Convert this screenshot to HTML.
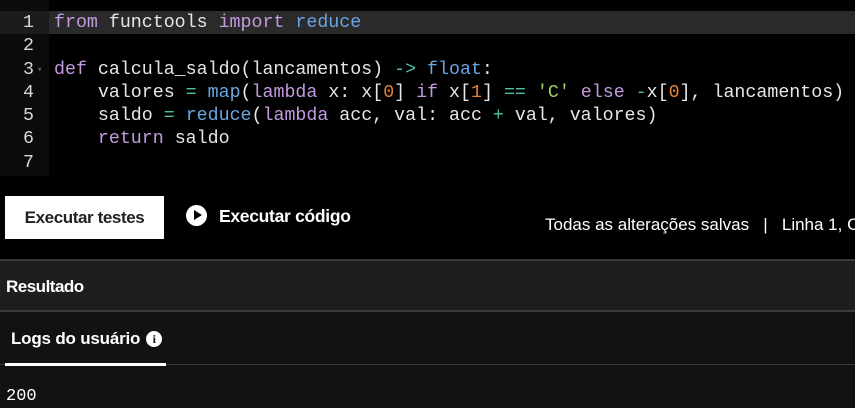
<!DOCTYPE html>
<html><head><style>
body{margin:0;width:855px;height:408px;background:#000;overflow:hidden;font-family:"Liberation Sans",sans-serif;position:relative}
.ed{position:absolute;left:0;top:0;width:855px;height:176px;background:#000}
.gut{position:absolute;left:0;top:0;width:49px;height:176px;background:#0b0b0b}
.hl{position:absolute;left:49px;top:11px;width:806px;height:23px;background:#2a2a2a}
.hlg{position:absolute;left:0;top:11px;width:49px;height:23px;background:#1c1c1c}
.code{position:absolute;left:0;top:12px;width:855px;font-family:"Liberation Mono",monospace;font-size:18.3px;line-height:23.3px;color:#e6e6e6;overflow:hidden}
.l{position:relative;height:23.3px;white-space:pre}
.ln{position:absolute;left:0;width:34px;text-align:right;color:#d8d8d8}
.ar{position:absolute;left:37px;top:0;color:#666;font-size:9px}
.t{position:absolute;left:54px}
.k{color:#c39ae0}.f{color:#6aa6e4}.o{color:#4fc0a8}.n{color:#e8822e}.s{color:#9ccf6a}
.btn{position:absolute;left:5px;top:196px;width:159px;height:43px;background:#fff;color:#222;font-weight:bold;font-size:17px;line-height:43px;text-align:center;letter-spacing:-0.4px}
.run{position:absolute;left:186px;top:205px;color:#fff;font-weight:bold;font-size:17.5px;line-height:22px;letter-spacing:-0.3px}
.ic{display:inline-block;width:21px;height:21px;border-radius:50%;background:#fff;vertical-align:middle;position:relative;margin-right:12px;top:-2px}
.ic:after{content:"";position:absolute;left:8px;top:5px;border-left:8px solid #000;border-top:5.5px solid transparent;border-bottom:5.5px solid transparent}
.stw{position:absolute;left:545px;top:212px;width:310px;height:26px;overflow:hidden}
.st{position:absolute;left:0;top:3px;color:#fff;font-size:17px;white-space:nowrap}
.res{position:absolute;left:0;top:259px;width:855px;height:51px;background:#1d1e20;border-top:2px solid #3a3a3a;box-sizing:border-box}
.res span{position:absolute;left:6px;top:16px;color:#fff;font-weight:bold;font-size:17px;letter-spacing:-0.5px}
.logs{position:absolute;left:0;top:310px;width:855px;height:98px;background:#121212;border-top:2px solid #3a3a3a;box-sizing:border-box}
.tab{position:absolute;left:11px;top:17px;color:#fff;font-weight:bold;font-size:17px;letter-spacing:-0.2px}
.inf{display:inline-block;width:16px;height:16px;border-radius:50%;background:#fff;color:#121212;font-size:12px;line-height:16px;text-align:center;font-family:"Liberation Serif",serif;font-weight:bold;vertical-align:1px;margin-left:6px;letter-spacing:0}
.ul{position:absolute;left:5px;top:51px;width:161px;height:3px;background:#fff}
.sep{position:absolute;left:0;top:52px;width:855px;height:1px;background:#3a3a3a}
.out{position:absolute;left:6px;top:75px;color:#fff;font-family:"Liberation Mono",monospace;font-size:17px}
</style></head><body>
<div class="ed"><div class="gut"></div><div class="hlg"></div><div class="hl"></div>
<div class="code"><div class="l"><span class="ln">1</span><span class="t"><span class="k">from</span> functools <span class="k">import</span> <span class="f">reduce</span></span></div><div class="l"><span class="ln">2</span></div><div class="l"><span class="ln">3</span><span class="ar">▾</span><span class="t"><span class="k">def</span> calcula_saldo(lancamentos) <span class="o">-&gt;</span> <span class="f">float</span>:</span></div><div class="l"><span class="ln">4</span><span class="t">    valores <span class="o">=</span> <span class="f">map</span>(<span class="k">lambda</span> x: x[<span class="n">0</span>] <span class="k">if</span> x[<span class="n">1</span>] <span class="o">==</span> <span class="s">'C'</span> <span class="k">else</span> <span class="o">-</span>x[<span class="n">0</span>], lancamentos)</span></div><div class="l"><span class="ln">5</span><span class="t">    saldo <span class="o">=</span> <span class="f">reduce</span>(<span class="k">lambda</span> acc, val: acc <span class="o">+</span> val, valores)</span></div><div class="l"><span class="ln">6</span><span class="t">    <span class="k">return</span> saldo</span></div><div class="l"><span class="ln">7</span></div></div></div>
<div class="btn">Executar testes</div>
<div class="run"><span class="ic"></span>Executar código</div>
<div class="stw"><div class="st">Todas as alterações salvas &nbsp;&nbsp;| &nbsp;&nbsp;Linha 1, Coluna 1</div></div>
<div class="res"><span>Resultado</span></div>
<div class="logs"><div class="tab">Logs do usuário<span class="inf">i</span></div><div class="sep"></div><div class="ul"></div><div class="out">200</div></div>
</body></html>
